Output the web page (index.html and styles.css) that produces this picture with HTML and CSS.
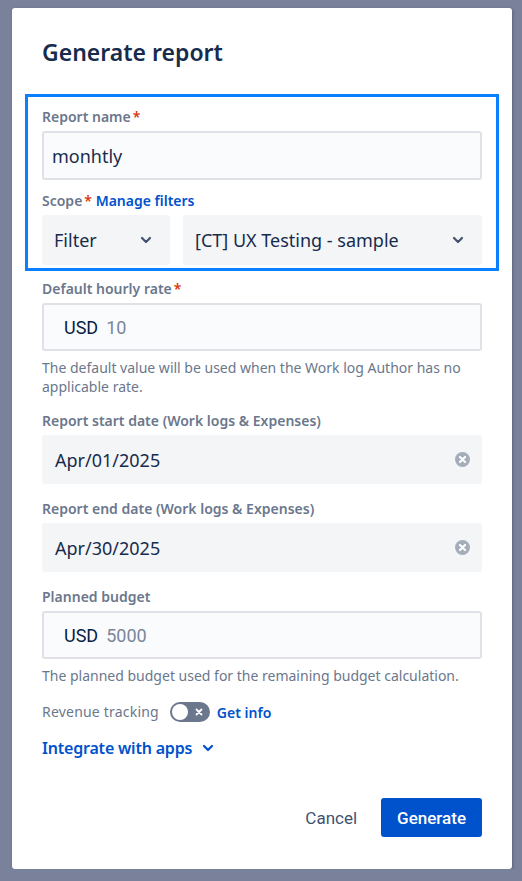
FILE: index.html
```html
<!DOCTYPE html>
<html lang="en">
<head>
    <meta charset="UTF-8">
    <meta name="viewport" content="width=device-width, initial-scale=1.0">
    <title>Generate report</title>
    <link rel="stylesheet" href="styles.css">
</head>
<body>
    <!-- Modal -->
    <div class="modal">
        <h1 class="modal-title">Generate report</h1>

        <!-- Focused group: name + scope -->
        <div class="focus-box">
            <label class="label">Report name<span class="req">*</span></label>
            <input class="text-input" type="text" value="monhtly">

            <div class="label scope-label">Scope<span class="req">*</span> <a href="#" class="link">Manage filters</a></div>
            <div class="scope-row">
                <div class="select select-small">
                    <span>Filter</span>
                    <svg class="chevron" width="12" height="8" viewBox="0 0 12 8"><path d="M2 2l4 4 4-4" fill="none" stroke="#42526e" stroke-width="2.2" stroke-linecap="round" stroke-linejoin="round"/></svg>
                </div>
                <div class="select select-wide">
                    <span>[CT] UX Testing - sample</span>
                    <svg class="chevron" width="12" height="8" viewBox="0 0 12 8"><path d="M2 2l4 4 4-4" fill="none" stroke="#42526e" stroke-width="2.2" stroke-linecap="round" stroke-linejoin="round"/></svg>
                </div>
            </div>
        </div>

        <!-- Hourly rate -->
        <div class="label field-label first">Default hourly rate<span class="req">*</span></div>
        <div class="money-input">
            <span class="currency">USD</span>
            <span class="amount">10</span>
        </div>
        <p class="helper">The default value will be used when the Work log Author has no applicable rate.</p>

        <!-- Dates -->
        <div class="label field-label">Report start date (Work logs &amp; Expenses)</div>
        <div class="date-field">
            <span>Apr/01/2025</span>
            <svg class="clear" width="15" height="15" viewBox="0 0 14 14"><circle cx="7" cy="7" r="7" fill="#a5adba"/><path d="M4.6 4.6l4.8 4.8M9.4 4.6l-4.8 4.8" stroke="#fff" stroke-width="2" stroke-linecap="round"/></svg>
        </div>

        <div class="label field-label">Report end date (Work logs &amp; Expenses)</div>
        <div class="date-field">
            <span>Apr/30/2025</span>
            <svg class="clear" width="15" height="15" viewBox="0 0 14 14"><circle cx="7" cy="7" r="7" fill="#a5adba"/><path d="M4.6 4.6l4.8 4.8M9.4 4.6l-4.8 4.8" stroke="#fff" stroke-width="2" stroke-linecap="round"/></svg>
        </div>

        <!-- Budget -->
        <div class="label field-label">Planned budget</div>
        <div class="money-input">
            <span class="currency">USD</span>
            <span class="amount">5000</span>
        </div>
        <p class="helper">The planned budget used for the remaining budget calculation.</p>

        <!-- Revenue tracking toggle -->
        <div class="toggle-row">
            <span class="label">Revenue tracking</span>
            <span class="toggle">
                <span class="knob"></span>
                <svg class="toggle-x" width="10" height="10" viewBox="0 0 10 10"><path d="M2.5 2.5l5 5M7.5 2.5l-5 5" stroke="#fff" stroke-width="1.8" stroke-linecap="round"/></svg>
            </span>
            <a href="#" class="link">Get info</a>
        </div>

        <a href="#" class="expand">Integrate with apps
            <svg width="12" height="8" viewBox="0 0 12 8"><path d="M2 2l4 4 4-4" fill="none" stroke="#0052cc" stroke-width="2.2" stroke-linecap="round" stroke-linejoin="round"/></svg>
        </a>

        <!-- Footer -->
        <div class="actions">
            <button class="btn btn-subtle">Cancel</button>
            <button class="btn btn-primary">Generate</button>
        </div>
    </div>
</body>
</html>
```

FILE: styles.css
```css
body {
    margin: 0;
    padding: 0;
    background-color: #79829a;
    font-family: "Noto Sans", "Open Sans", sans-serif;
    color: #172b4d;
}

.modal {
    width: 500px;
    height: 861px;
    margin: 8px 0 0 12px;
    padding: 30px 30px 0 30px;
    box-sizing: border-box;
    background: #fff;
    border-radius: 3px;
    box-shadow: 1px 1px 3px rgba(9, 30, 66, 0.3);
}

.modal-title {
    margin: 0;
    font-size: 23px;
    line-height: 28px;
    font-weight: 600;
    color: #172b4d;
}

.focus-box {
    margin: 28px -17px 0 -17px;
    padding: 10px 14px 3px 14px;
    border: 3px solid #0a80ff;
}

.label {
    display: block;
    font-size: 14px;
    line-height: 20px;
    font-weight: 600;
    color: #6b778c;
}

.req {
    color: #de350b;
    margin-left: 2px;
}

.link {
    color: #0052cc;
    text-decoration: none;
    font-weight: 600;
}

.text-input {
    display: block;
    width: 100%;
    height: 49px;
    margin-top: 4px;
    padding: 0 8px;
    box-sizing: border-box;
    border: 2px solid #dfe1e6;
    border-radius: 3px;
    background: #fafbfc;
    font-family: inherit;
    font-size: 18px;
    color: #172b4d;
}

.scope-label {
    margin-top: 11px;
}

.scope-row {
    display: flex;
    gap: 13px;
    margin-top: 4px;
}

.select {
    display: flex;
    align-items: center;
    justify-content: space-between;
    height: 50px;
    padding: 0 18px 0 12px;
    box-sizing: border-box;
    background: #f4f5f7;
    border-radius: 3px;
    font-size: 18px;
}

.select-small {
    width: 128px;
}

.select-wide {
    flex: 1;
}

.field-label {
    margin-top: 15px;
}

.field-label.first {
    margin-top: 8px;
}

.money-input {
    display: flex;
    align-items: center;
    gap: 8px;
    height: 48px;
    margin-top: 4px;
    padding: 0 20px;
    box-sizing: border-box;
    border: 2px solid #dfe1e6;
    border-radius: 3px;
    background: #fafbfc;
    font-family: Roboto, "Liberation Sans", sans-serif;
    font-size: 18px;
}

.currency {
    color: #091e42;
}

.amount {
    color: #7a869a;
}

.helper {
    margin: 7px 0 0 0;
    font-size: 14px;
    line-height: 19px;
    color: #6b778c;
}

.date-field {
    display: flex;
    align-items: center;
    justify-content: space-between;
    height: 49px;
    margin-top: 4px;
    padding: 0 12px 0 13px;
    box-sizing: border-box;
    background: #f4f5f7;
    border-radius: 3px;
    font-size: 18px;
}

.toggle-row {
    display: flex;
    align-items: center;
    margin-top: 17px;
    height: 20px;
    font-size: 14px;
}

.toggle-row .label {
    font-weight: 400;
    letter-spacing: 0.2px;
}

.toggle {
    position: relative;
    display: inline-block;
    width: 40px;
    height: 20px;
    margin: 0 7px 0 11px;
    border-radius: 10px;
    background: #6b778c;
}

.knob {
    position: absolute;
    top: 2px;
    left: 2px;
    width: 16px;
    height: 16px;
    border-radius: 50%;
    background: #fff;
}

.toggle-x {
    position: absolute;
    top: 5px;
    right: 6px;
}

.expand {
    display: inline-flex;
    align-items: center;
    gap: 10px;
    margin-top: 14px;
    font-size: 16px;
    line-height: 24px;
    font-weight: 600;
    letter-spacing: -0.2px;
    color: #0052cc;
    text-decoration: none;
}

.actions {
    display: flex;
    justify-content: flex-end;
    gap: 8px;
    margin-top: 38px;
}

.btn {
    height: 39px;
    padding: 0 16px;
    border: none;
    border-radius: 3px;
    font-family: Roboto, "Liberation Sans", sans-serif;
    font-size: 17px;
    cursor: pointer;
}

.btn-subtle {
    background: transparent;
    color: #42526e;
}

.btn-primary {
    background: #0052cc;
    color: #fff;
    font-weight: 500;
}
```
